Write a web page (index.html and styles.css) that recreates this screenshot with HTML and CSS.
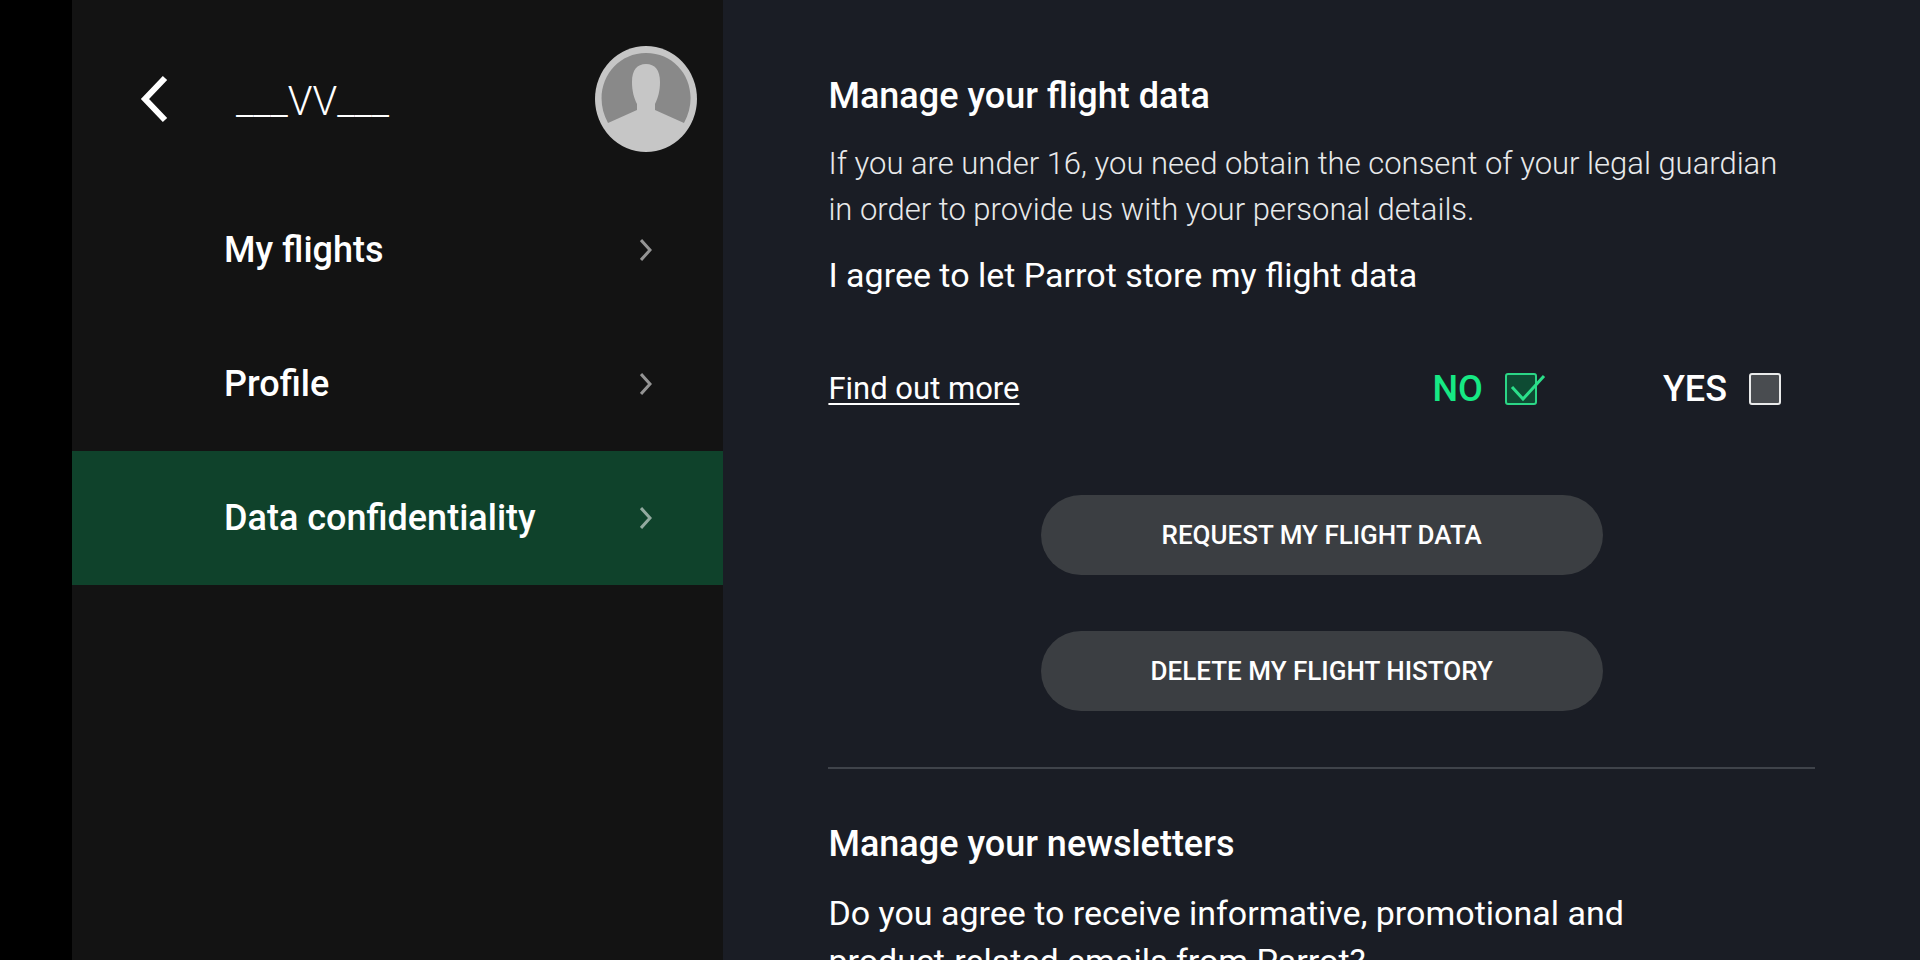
FILE: index.html
```html
<!DOCTYPE html>
<html lang="en">
<head>
  <meta charset="UTF-8">
  <meta name="viewport" content="width=device-width, initial-scale=1.0">
  <title>Data confidentiality</title>
  <link rel="stylesheet" href="styles.css">
</head>
<body>
  <div class="app">
    <aside class="sidebar">
      <header class="user">
        <button class="back" type="button" aria-label="Back">
          <svg width="28" height="48" viewBox="0 0 28 48"><path d="M25 3 L5 24 L25 45" fill="none" stroke="#fff" stroke-width="6"/></svg>
        </button>
        <span class="user-name">___VV___</span>
        <svg class="avatar" width="102" height="106" viewBox="0 0 102 106" role="img" aria-label="Avatar">
          <ellipse cx="51" cy="53" rx="51" ry="53" fill="#c6c6c6"/>
          <path d="M13 77 C-5 44 17 7 51 7 C86 7 107 44 89 77 L60 64 V58 C63 52 65 45 65 36 C65 24 60 18 51 18 C42 18 37 24 37 36 C37 45 39 52 42 58 V64 Z" fill="#898989"/>
        </svg>
      </header>
      <nav class="menu">
        <a class="menu-item" href="#flights">My flights
          <svg class="chevron" width="12" height="22" viewBox="0 0 12 22"><path d="M1 1 L10 11 L1 21"/></svg>
        </a>
        <a class="menu-item" href="#profile">Profile
          <svg class="chevron" width="12" height="22" viewBox="0 0 12 22"><path d="M1 1 L10 11 L1 21"/></svg>
        </a>
        <a class="menu-item active" href="#data" aria-current="page">Data confidentiality
          <svg class="chevron" width="12" height="22" viewBox="0 0 12 22"><path d="M1 1 L10 11 L1 21"/></svg>
        </a>
      </nav>
    </aside>

    <main class="content">
      <section class="block">
        <h2>Manage your flight data</h2>
        <p class="note">If you are under 16, you need obtain the consent of your legal guardian in order to provide us with your personal details.</p>
        <p class="question">I agree to let Parrot store my flight data</p>
        <div class="consent">
          <a class="more" href="#more">Find out more</a>
          <label class="choice choice-no">NO
            <span class="box">
              <input type="checkbox" name="no" checked>
              <svg class="tick" width="36" height="28" viewBox="0 0 36 28"><path d="M2 13 L13 25 L34 2"/></svg>
            </span>
          </label>
          <label class="choice">YES
            <span class="box">
              <input type="checkbox" name="yes">
              <svg class="tick" width="36" height="28" viewBox="0 0 36 28"><path d="M2 13 L13 25 L34 2"/></svg>
            </span>
          </label>
        </div>
        <div class="actions">
          <button class="btn" type="button">REQUEST MY FLIGHT DATA</button>
          <button class="btn" type="button">DELETE MY FLIGHT HISTORY</button>
        </div>
      </section>
      <section class="block">
        <h2>Manage your newsletters</h2>
        <p class="question newsletter">Do you agree to receive informative, promotional and product-related emails from Parrot?</p>
      </section>
    </main>
  </div>
</body>
</html>
```
FILE: styles.css
```css
* { box-sizing: border-box; }
html, body { height: 100%; margin: 0; }
body {
  background: #000; color: #fff; overflow: hidden;
  font-family: Roboto, "Liberation Sans", sans-serif;
}
h2, p { margin: 0; }
a { color: inherit; }
button { font: inherit; color: inherit; border: none; cursor: pointer; }

.app {
  display: grid; grid-template-columns: 35.25% 1fr;
  height: 100vh; padding-left: 72px;
}

/* sidebar */
.sidebar { background: #131313; }
.user {
  display: flex; align-items: center;
  height: 183px; padding: 14px 26px 0 68px;
}
.back { display: flex; padding: 0; background: none; }
.user-name { flex: 1; padding: 6px 0 0 68px; font-size: 40px; font-weight: 300; }
.menu-item {
  display: flex; align-items: center; justify-content: space-between;
  height: 134px; padding: 0 71px 0 152px;
  font-size: 36px; font-weight: 500; text-decoration: none;
}
.menu-item.active { background: #0f422b; }
.chevron path { fill: none; stroke: #fff; stroke-opacity: 0.55; stroke-width: 3; }

/* content */
.content {
  background: #1a1d25; overflow-y: auto; scrollbar-width: none;
  padding: 74px 105px 40px;
}
.block + .block { margin-top: 56px; padding-top: 53px; border-top: 2px solid #3f434a; }
h2 { font-size: 36px; line-height: 44px; font-weight: 500; }
.note {
  margin-top: 23px; padding-right: 24px;
  font-size: 31px; line-height: 46px; font-weight: 300; color: #e8e9ea;
}
.question { margin-top: 18px; font-size: 34px; line-height: 48px; }
.newsletter { max-width: 850px; margin-top: 23px; }

.consent {
  display: flex; align-items: center;
  margin-top: 66px; padding-right: 34px; gap: 126px;
}
.more {
  margin-right: auto; font-size: 31px; line-height: 48px;
  text-decoration-thickness: 2px; text-underline-offset: 4px;
}
.choice {
  display: flex; align-items: center; gap: 22px;
  font-size: 36px; line-height: 48px; font-weight: 500; cursor: pointer;
}
.choice-no { color: #16e884; }
.box { position: relative; display: flex; }
.box input {
  appearance: none; width: 32px; height: 32px; margin: 0;
  background: #494c50; border: 2px solid #e9eaea; border-radius: 3px;
}
.box input:checked { background: #0e4b33; border-color: #2bd686; }
.tick { position: absolute; left: 5px; top: 1px; display: none; pointer-events: none; }
.tick path { fill: none; stroke: #2bdf8a; stroke-width: 3; }
.box input:checked + .tick { display: block; }

.actions {
  display: flex; flex-direction: column; align-items: center; gap: 56px;
  margin-top: 82px;
}
.btn {
  width: 57%; min-height: 80px; border-radius: 40px;
  background: #3b3e42; font-size: 26px; font-weight: 500;
}
```
